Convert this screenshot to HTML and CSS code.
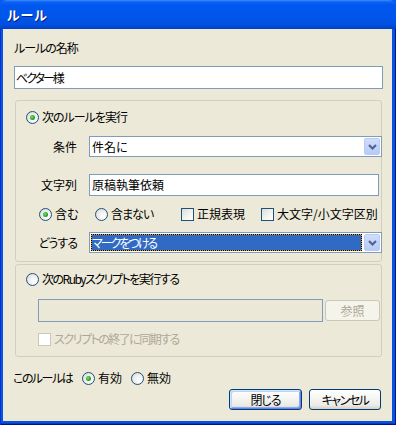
FILE: index.html
```html
<!DOCTYPE html>
<html>
<head>
    <title>ルール</title>
    <link rel="stylesheet" href="styles.css">
</head>
<body>
    <div class="window">
        <div class="titlebar"><span class="title">ルール</span></div>
        <div class="frame">
            <div class="client">
                <div class="label narrow">ルールの名称</div>
                <div class="textbox name-box"><span class="narrowest">ベクター様</span></div>

                <div class="group group-rule">
                    <div class="row head-row">
                        <span class="radio checked"></span><span class="opt-text narrow">次のルールを実行</span>
                    </div>
                    <div class="row field-row cond-row">
                        <span class="field-label">条件</span>
                        <div class="combo">
                            <span class="combo-text">件名に</span>
                            <span class="combo-btn"><svg width="9" height="6" viewBox="0 0 9 6"><path d="M1 1 L4.5 4.5 L8 1" fill="none" stroke="#4d6185" stroke-width="2"/></svg></span>
                        </div>
                    </div>
                    <div class="row field-row text-row">
                        <span class="field-label">文字列</span>
                        <div class="textbox word-box">原稿執筆依頼</div>
                    </div>
                    <div class="row opt-row">
                        <span class="opt opt-contain"><span class="radio checked"></span><span class="opt-text">含む</span></span>
                        <span class="opt opt-not"><span class="radio"></span><span class="opt-text narrow">含まない</span></span>
                        <span class="opt opt-regex"><span class="check"></span><span class="opt-text">正規表現</span></span>
                        <span class="opt"><span class="check"></span><span class="opt-text">大文字/小文字区別</span></span>
                    </div>
                    <div class="row field-row action-row">
                        <span class="field-label narrow">どうする</span>
                        <div class="combo">
                            <span class="combo-text selected narrowest">マークをつける</span>
                            <span class="combo-btn"><svg width="9" height="6" viewBox="0 0 9 6"><path d="M1 1 L4.5 4.5 L8 1" fill="none" stroke="#4d6185" stroke-width="2"/></svg></span>
                        </div>
                    </div>
                </div>

                <div class="group group-ruby">
                    <div class="row ruby-head">
                        <span class="radio"></span><span class="opt-text narrower">次のRubyスクリプトを実行する</span>
                    </div>
                    <div class="row script-row">
                        <div class="textbox disabled script-box"></div>
                        <span class="button disabled browse-btn">参照</span>
                    </div>
                    <div class="row sync-row">
                        <span class="check disabled"></span><span class="opt-text grey narrower">スクリプトの終了に同期する</span>
                    </div>
                </div>

                <div class="row state-row">
                    <span class="state-label narrower">このルールは</span>
                    <span class="opt opt-on"><span class="radio checked"></span><span class="opt-text">有効</span></span>
                    <span class="opt"><span class="radio"></span><span class="opt-text">無効</span></span>
                </div>

                <div class="button-row">
                    <span class="button default close-btn narrow">閉じる</span>
                    <span class="button cancel-btn narrower">キャンセル</span>
                </div>
            </div>
        </div>
    </div>
</body>
</html>
```

FILE: styles.css
```css
* {
    box-sizing: border-box;
}

body {
    margin: 0;
    font-family: "Noto Sans CJK JP", "Liberation Sans", sans-serif;
    font-size: 12px;
    line-height: 14px;
    font-feature-settings: "palt";
    color: #000;
    background: #0a5cef;
}

/* kana in the original UI font are much narrower than in Noto */
.narrow {
    letter-spacing: -1px;
}

.narrower {
    letter-spacing: -1.5px;
}

.narrowest {
    letter-spacing: -2px;
}

.window {
    width: 396px;
    height: 425px;
    display: flex;
    flex-direction: column;
    border-radius: 7px 7px 0 0;
    overflow: hidden;
}

.titlebar {
    height: 29px;
    flex: none;
    display: flex;
    align-items: center;
    padding: 1px 0 0 7px;
    background: linear-gradient(#3d8dff 0, #0a62f5 2px, #0058ee 5px, #0055ea 18px, #0050e0 24px, #0048d4 27px, #003fc0 29px);
}

.title {
    color: #fff;
    font-weight: bold;
    font-size: 13px;
    letter-spacing: 1px;
    text-shadow: 1px 1px #0a1e7a;
}

.frame {
    flex: 1;
    padding: 0 4px 4px 3px;
    background: #0855dd;
    box-shadow: inset 1px 0 #0831d9, inset -1px 0 #00138c, inset 0 -1px #00138c, inset 0 -2px #0a3cc0;
}

.client {
    height: 100%;
    background: #ece9d8;
    padding: 12px 9px 0 11px;
}

.label {
    height: 14px;
}

.textbox {
    background: #fff;
    border: 1px solid #7f9db9;
    padding-left: 2px;
    display: flex;
    align-items: center;
}

.name-box {
    margin-top: 11px;
    height: 23px;
    padding-left: 1px;
}

.group {
    border: 1px solid #d0d0bf;
    border-radius: 3px;
    margin: 0 1px;
}

.group-rule {
    margin-top: 11px;
    height: 162px;
}

.group-ruby {
    margin-top: 2px;
    height: 93px;
}

.row {
    display: flex;
    align-items: center;
}

.head-row {
    margin-top: 9px;
    height: 14px;
    padding-left: 10px;
}

.field-label {
    width: 61px;
    text-align: right;
    margin-right: 12px;
    flex: none;
}

.cond-row {
    margin-top: 12px;
    height: 21px;
}

.text-row {
    margin-top: 17px;
    height: 22px;
}

.word-box {
    width: 290px;
    height: 22px;
}

.opt-row {
    margin-top: 11px;
    height: 14px;
    padding-left: 23px;
}

.action-row {
    margin-top: 11px;
    height: 21px;
}

.opt {
    display: flex;
    align-items: center;
    flex: none;
}

.opt-contain {
    width: 56px;
}

.opt-not {
    width: 86px;
}

.opt-regex {
    width: 80px;
}

.opt-text {
    margin-left: 3px;
    white-space: nowrap;
}

.grey {
    color: #aca899;
}

.radio {
    width: 13px;
    height: 13px;
    flex: none;
    border-radius: 50%;
    border: 1px solid #1c5180;
    background: radial-gradient(circle at 65% 65%, #fff 0, #f2f2ef 40%, #d6d5cc 100%);
    display: flex;
    align-items: center;
    justify-content: center;
}

.radio.checked::after {
    content: "";
    width: 5px;
    height: 5px;
    border-radius: 50%;
    background: radial-gradient(circle at 40% 40%, #7be07b 0, #21a121 60%, #1a8a1a 100%);
}

.check {
    width: 13px;
    height: 13px;
    flex: none;
    border: 1px solid #1c5180;
    background: linear-gradient(135deg, #dcdcd7 0, #f4f4f1 60%, #fff 100%);
}

.check.disabled {
    border-color: #cac8bb;
    background: #fff;
}

.combo {
    width: 293px;
    height: 21px;
    flex: none;
    border: 1px solid #7f9db9;
    background: #fff;
    display: flex;
    align-items: center;
    padding: 1px;
}

.combo-text {
    flex: 1;
    height: 17px;
    padding-left: 1px;
    display: flex;
    align-items: center;
}

.combo-text.selected {
    margin-right: 2px;
    background: #316ac5;
    color: #fff;
    box-shadow: inset 0 0 0 1px #dfa030;
    outline: 1px dotted #000;
    outline-offset: -1px;
}

.combo-btn {
    width: 16px;
    height: 17px;
    flex: none;
    border: 1px solid #b9caf3;
    border-radius: 2px;
    background: linear-gradient(#cfdcfd, #b6cbf8);
    display: flex;
    align-items: center;
    justify-content: center;
}

.ruby-head {
    margin-top: 7px;
    height: 14px;
    padding-left: 10px;
}

.script-row {
    margin-top: 13px;
    height: 23px;
    padding-left: 22px;
}

.textbox.disabled {
    background: #ebe8d7;
}

.script-box {
    width: 285px;
    height: 23px;
}

.button {
    height: 21px;
    border: 1px solid #003c74;
    border-radius: 3px;
    background: linear-gradient(#fff 0, #f6f6f3 40%, #ecebe6 80%, #d6d0c5 100%);
    display: flex;
    align-items: center;
    justify-content: center;
    flex: none;
}

.button.disabled {
    border-color: #c9c7ba;
    background: #f5f4ea;
    color: #aca899;
}

.browse-btn {
    width: 55px;
    margin-left: 2px;
}

.sync-row {
    margin-top: 10px;
    height: 14px;
    padding-left: 22px;
}

.state-row {
    margin-top: 14px;
    height: 14px;
}

.state-label {
    width: 69px;
    margin-left: -1px;
    flex: none;
}

.opt-on {
    width: 49px;
}

.button-row {
    margin-top: 4px;
    margin-right: 2px;
    display: flex;
    justify-content: flex-end;
    gap: 7px;
}

.close-btn {
    width: 73px;
}

.button.default {
    box-shadow: inset 1px 1px #cee7ff, inset -1px -1px #6982ee, inset 2px 2px #bcd4f6, inset -2px -2px #89adf2;
}

.cancel-btn {
    width: 72px;
}
```
